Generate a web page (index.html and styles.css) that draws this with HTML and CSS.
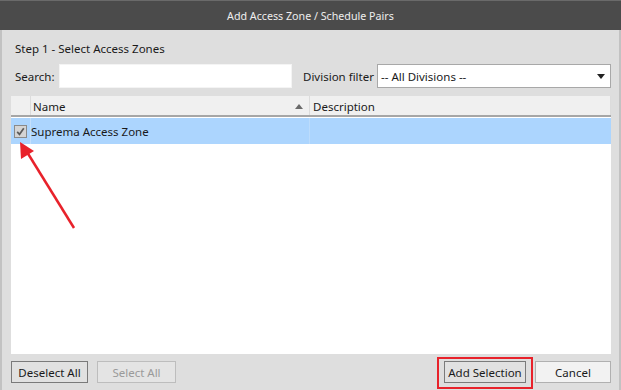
FILE: index.html
```html
<!DOCTYPE html>
<html>
  <head>
    <title>Add Access Zone / Schedule Pairs</title>
  <link rel="stylesheet" href="styles.css">
</head>
<body>
  <div class="window">
    <div class="titlebar">Add Access Zone / Schedule Pairs</div>

    <div class="content">
      <div class="step">Step 1 - Select Access Zones</div>

      <div class="filters">
        <label class="lbl-search">Search:</label>
        <input class="search" type="text">
        <label class="lbl-division">Division filter</label>
        <div class="select">
          <span>-- All Divisions --</span>
          <span class="arrow"></span>
        </div>
      </div>

      <div class="list">
        <div class="list-head">
          <div class="col-check"></div>
          <div class="col-name">Name <span class="sort"></span></div>
          <div class="col-desc">Description</div>
        </div>
        <div class="row selected">
          <div class="col-check"><span class="checkbox">
            <svg width="9" height="9" viewBox="0 0 9 9"><path d="M1.2 4.8 L3.5 7.3 L7.8 1.2" fill="none" stroke="#5a5a5a" stroke-width="1.7"/></svg>
          </span></div>
          <div class="col-name">Suprema Access Zone</div>
          <div class="col-desc"></div>
        </div>
      </div>

      <div class="buttons">
        <button class="btn btn-deselect">Deselect All</button>
        <button class="btn btn-select" disabled>Select All</button>
        <div class="spacer"></div>
        <button class="btn btn-add">Add Selection</button>
        <button class="btn btn-cancel">Cancel</button>
      </div>
    </div>

    <!-- annotations -->
    <svg class="arrow-note" width="621" height="390" viewBox="0 0 621 390">
      <line x1="74" y1="228" x2="27" y2="152" stroke="#e8222b" stroke-width="2.5"/>
      <polygon points="20,142 21,159 34,151" fill="#e8222b"/>
    </svg>
    <div class="highlight"></div>
  </div>
</body>
</html>
```

FILE: styles.css
```css
body {
  margin: 0;
  font-family: "Noto Sans", "Open Sans", sans-serif;
  font-size: 11.5px;
  color: #1a1a1a;
}

.window {
  position: relative;
  width: 621px;
  height: 390px;
  box-sizing: border-box;
  background: #dedede;
  border-left: 2px solid #c2c2c2;
  border-right: 2px solid #c2c2c2;
  display: flex;
  flex-direction: column;
}

.titlebar {
  height: 30px;
  background: #4b4b4b;
  border-top: 1px solid #6a6a6a;
  box-sizing: border-box;
  color: #eeeeee;
  font-size: 10.7px;
  display: flex;
  align-items: center;
  justify-content: center;
  margin: 0 -2px;
}

.content {
  flex: 1;
  padding: 0 8px 0 9px;
  display: flex;
  flex-direction: column;
}

.step {
  margin-top: 11px;
  height: 16px;
  line-height: 16px;
  padding-left: 4px;
}

.filters {
  margin-top: 7px;
  height: 24px;
  display: flex;
  align-items: center;
  white-space: nowrap;
}

.lbl-search {
  padding-left: 4px;
  width: 44px;
}

.search {
  width: 233px;
  height: 24px;
  box-sizing: border-box;
  border: 1px solid #f4f4f4;
  background: #fff;
  margin: 0;
}

.lbl-division {
  margin-left: 11px;
  width: 74px;
}

.select {
  flex: 1;
  height: 24px;
  box-sizing: border-box;
  border: 1px solid #a8a8a8;
  background: #fff;
  display: flex;
  align-items: center;
  justify-content: space-between;
  padding: 0 5px 0 3px;
}

.select .arrow {
  width: 0;
  height: 0;
  border-left: 4px solid transparent;
  border-right: 4px solid transparent;
  border-top: 5px solid #222;
}

.list {
  margin-top: 8px;
  height: 258px;
  background: #fff;
}

.list-head {
  display: flex;
  height: 21px;
  background: #f0f0f0;
  border-bottom: 2px solid #a6a6a6;
  box-sizing: border-box;
}

.list-head > div {
  display: flex;
  align-items: center;
  padding-top: 1px;
  border-right: 1px solid #dcdcdc;
}

.col-check {
  width: 19px;
  flex: none;
}

.col-name {
  width: 276px;
  padding-left: 2px;
  justify-content: space-between;
  flex: none;
}

.col-desc {
  flex: 1;
  padding-left: 3px;
}

.sort {
  width: 0;
  height: 0;
  border-left: 4px solid transparent;
  border-right: 4px solid transparent;
  border-bottom: 5px solid #6a6a6a;
  margin-right: 6px;
}

.row {
  display: flex;
  height: 26px;
  margin-top: 1px;
}

.row > div {
  display: flex;
  align-items: center;
}

.row.selected {
  background: #acd5fe;
}

.row .col-check {
  border-right: 1px solid #c4e0fc;
  justify-content: center;
}

.row .col-name {
  padding-left: 0;
  width: 278px;
  border-right: 1px solid #bcdcfc;
}

.checkbox {
  width: 11px;
  height: 11px;
  border: 1px solid #8a8a8a;
  background: #d4d4d4;
  display: flex;
  align-items: center;
  justify-content: center;
  margin-left: -1px;
}

.buttons {
  margin-top: 7px;
  display: flex;
  height: 22px;
}

.btn {
  height: 22px;
  margin: 0;
  padding: 0;
  font-family: "Noto Sans", "Open Sans", sans-serif;
  font-size: 11.5px;
  color: #1a1a1a;
  background: #e1e1e1;
  border: 1px solid #7a7a7a;
}

.btn-deselect { width: 77px; }

.btn-select {
  width: 79px;
  margin-left: 9px;
  color: #9a9a9a;
  border-color: #bdbdbd;
  background: #e4e4e4;
}

.spacer { flex: 1; }

.btn-add { width: 82px; }

.btn-cancel {
  width: 76px;
  margin-left: 9px;
  background: #f2f2f2;
  border-color: #b0b0b0;
}

.arrow-note {
  position: absolute;
  left: -2px;
  top: 0;
  pointer-events: none;
}

.highlight {
  position: absolute;
  left: 435px;
  top: 357px;
  width: 92px;
  height: 28px;
  border: 2px solid #e8222b;
}
```
